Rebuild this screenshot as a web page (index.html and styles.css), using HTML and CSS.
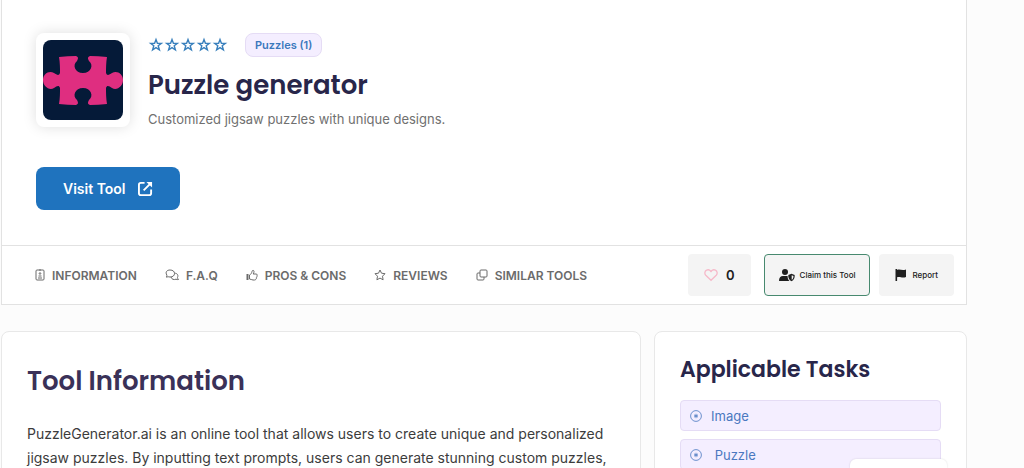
FILE: index.html
```html
<!DOCTYPE html>
<html lang="en">
<head>
	<meta charset="UTF-8">
	<meta name="viewport" content="width=device-width, initial-scale=1">
	<title>Puzzle generator</title>
	<link rel="stylesheet" href="styles.css">
</head>
<body>
	<div class="container">
		<header class="tool-header">
			<div class="tool-intro">
				<div class="tool-top">
					<div class="tool-logo">
						<svg viewBox="0 0 80 80" aria-hidden="true">
							<rect width="80" height="80" fill="#051a38"/>
							<path fill="#df2e80" d="M16 17q9-1 17-1c3 1 2 3 1 5-5 4-2 12 6 12s11-8 6-12c-1-2-2-4 1-5q8 0 17 1c-1 6-1 11-1 16 1 3 3 2 6 0 5-3 11 1 11 7s-6 11-11 8c-3-2-5-3-6 0 0 5 0 10 1 16q-9 1-17 1c-3-1-2-3-1-5 5-4 2-12-6-12s-11 8-6 12c1 2 2 4-1 5q-8 0-17-1c1-6 1-11 1-16-1-3-3-2-6 0-5 3-11-2-11-8s6-10 11-7c3 2 5 3 6 0 0-5 0-10-1-16z"/>
						</svg>
					</div>
					<div class="tool-title">
						<div class="tool-meta">
							<div class="stars" role="img" aria-label="0 of 5 stars">
								<svg viewBox="0 0 16 16"><path d="M8 2.500l1.400 3.700 4 .1-3.200 2.500 1.200 4L8 10.600l-3.400 2.200 1.200-4-3.200-2.500 4-.1z"/></svg>
								<svg viewBox="0 0 16 16"><path d="M8 2.500l1.400 3.700 4 .1-3.200 2.500 1.200 4L8 10.600l-3.400 2.200 1.200-4-3.200-2.500 4-.1z"/></svg>
								<svg viewBox="0 0 16 16"><path d="M8 2.500l1.400 3.700 4 .1-3.200 2.500 1.200 4L8 10.600l-3.400 2.200 1.200-4-3.200-2.500 4-.1z"/></svg>
								<svg viewBox="0 0 16 16"><path d="M8 2.500l1.400 3.700 4 .1-3.200 2.500 1.200 4L8 10.600l-3.400 2.200 1.200-4-3.200-2.500 4-.1z"/></svg>
								<svg viewBox="0 0 16 16"><path d="M8 2.500l1.400 3.700 4 .1-3.200 2.500 1.200 4L8 10.600l-3.400 2.200 1.200-4-3.200-2.500 4-.1z"/></svg>
							</div>
							<a class="tag" href="#">Puzzles (1)</a>
						</div>
						<h1>Puzzle generator</h1>
						<p>Customized jigsaw puzzles with unique designs.</p>
					</div>
				</div>
				<a class="btn-visit" href="#">
					Visit Tool
					<svg viewBox="0 0 16 16" fill="none" stroke="currentColor" stroke-width="2" aria-hidden="true">
						<path d="M7 2H3q-2 0-2 2v9q0 2 2 2h9q2 0 2-2V9M6 10l8-8"/>
						<path d="M9 1h6v6z" fill="currentColor" stroke="none"/>
					</svg>
				</a>
			</div>
			<div class="tool-bar">
				<nav class="tabs">
					<a href="#information">
						<svg class="narrow" viewBox="0 0 10 12" aria-hidden="true"><rect x="1" y="1" width="8" height="10" rx="1"/><path d="M4 1h2M3 9h4"/><circle cx="5" cy="4.500" r=".8"/><path d="M3.500 7h3"/></svg>
						INFORMATION
					</a>
					<a href="#faq">
						<svg class="wide" viewBox="0 0 14 12" aria-hidden="true"><path d="M1 8c1-1 1-1 .8-2C0 3 2 1 5 1s4.500 1.500 4.500 3.500S8 8 5 8c-1 0-1.500-.3-2-.3q-1 .5-2 .3z"/><path d="M9.500 4.200c3 0 4 2 3 4.300q.2 1.500 1 2-1.300.3-2.500-.3c-2 .8-4.300.3-5-2.200"/></svg>
						F.A.Q
					</a>
					<a href="#pros">
						<svg viewBox="0 0 12 12" aria-hidden="true"><path d="M1.500 5v6" stroke-width="2"/><path d="M3.500 6c1.500-.5 2.200-2.200 2.500-3.500.2-1.500 2-1.500 2 0 0 1-.4 1.700-.8 2.500H10c1.500 0 1.500 1.500.7 2 .6.7.3 1.400-.4 1.700.3.900 0 1.300-.6 1.500 0 .8-.7.800-1.200.8H7c-1.500 0-2-1-3.500-1z"/></svg>
						PROS &amp; CONS
					</a>
					<a href="#reviews">
						<svg viewBox="0 0 12 12" aria-hidden="true"><path d="M6 1l1.500 3.200 3.500.5-2.500 2.500.6 3.600L6 9.100l-3.100 1.700.6-3.600L1 4.700l3.500-.5z"/></svg>
						REVIEWS
					</a>
					<a href="#similar">
						<svg viewBox="0 0 12 12" aria-hidden="true"><rect x="4" y="1" width="7" height="7" rx="1"/><path d="M4 4H2q-1 0-1 1v5q0 1 1 1h5q1 0 1-1V8"/></svg>
						SIMILAR TOOLS
					</a>
				</nav>
				<div class="actions">
					<button class="btn-like" type="button" aria-label="Like, 0">
						<svg viewBox="0 0 16 14" fill="none" stroke="#f6b9c9" stroke-width="1.500" aria-hidden="true"><path d="M8 13L2 7.200C.3 5.400.8 2.400 3 1.400c2-.9 3.800 0 5 1.600 1.200-1.600 3-2.500 5-1.600 2.200 1 2.700 4 1 5.800z"/></svg>
						0
					</button>
					<button class="btn-claim" type="button">
						<svg viewBox="0 0 16 14" fill="currentColor" aria-hidden="true"><circle cx="6" cy="4" r="3"/><path d="M0 13c0-3.500 1.500-5 4-5h4l.7.2C8.500 10 9 11.800 10.500 13z"/><path d="M12.500 5.800l3.200 1.200c.2 3-.8 5-3.200 6.200-2.400-1.200-3.400-3.200-3.200-6.200z"/><path fill="#f4f4f4" d="M12.700 7.200l1.800.7c0 1.900-.6 3.100-1.800 3.900z"/></svg>
						Claim this Tool
					</button>
					<button class="btn-report" type="button">
						<svg viewBox="0 0 12 14" fill="currentColor" aria-hidden="true"><path d="M.5 1h1.600v1c3-1.200 5 1 8.900-.6V9c-4 1.500-6-.8-8.900.3V13H.5z"/></svg>
						Report
					</button>
				</div>
			</div>
		</header>

		<div class="columns">
			<main class="card info" id="information">
				<h2>Tool Information</h2>
				<p>PuzzleGenerator.ai is an online tool that allows users to create unique and personalized jigsaw puzzles. By inputting text prompts, users can generate stunning custom puzzles,</p>
			</main>
			<aside class="card tasks">
				<h3>Applicable Tasks</h3>
				<ul>
					<li><a href="#">
						<svg viewBox="0 0 12 12" aria-hidden="true"><circle cx="6" cy="6" r="5.400"/><path d="M6 3.800v4.400M4 4.900l4 2.200M8 4.900L4 7.100"/></svg>
						Image
					</a></li>
					<li><a href="#">
						<svg viewBox="0 0 12 12" aria-hidden="true"><circle cx="6" cy="6" r="5.400"/><path d="M6 3.800v4.400M4 4.900l4 2.200M8 4.900L4 7.100"/></svg>
						&nbsp;Puzzle
					</a></li>
				</ul>
			</aside>
		</div>
	</div>
	<div class="float-box"></div>
</body>
</html>
```
FILE: styles.css
```css
*{
	box-sizing:border-box;
}
body{
	margin:0;
	background:#fcfcfc;
	font-family:Inter, "Liberation Sans", sans-serif;
	font-size:13px;
	color:#3c3c3c;
}
h1, h2, h3, p, ul{
	margin:0;
	padding:0;
}
a{
	text-decoration:none;
}
svg{
	display:block;
	flex:none;
}
.container{
	padding:0 57px 0 1px;
}

/* header */
.tool-header{
	background:#fff;
	border:1px solid #e2e2e2;
	border-top:0;
}
.tool-intro{
	padding:33px 34px 35px;
}
.tool-top{
	display:flex;
	gap:18px;
	margin-bottom:38px;
}
.tool-logo{
	flex:none;
	align-self:flex-start;
	padding:7px;
	border-radius:8px;
	background:#fff;
	box-shadow:0 0 14px rgba(0,0,0,0.13);
}
.tool-logo svg{
	width:80px;
	height:80px;
	border-radius:8px;
}
.tool-meta{
	display:flex;
	align-items:center;
	gap:17px;
	height:24px;
}
.stars{
	display:flex;
}
.stars svg{
	width:16px;
	height:16px;
	fill:none;
	stroke:#3980bd;
	stroke-width:1.4;
}
.tag{
	padding:0 9px;
	border:1px solid #e5dcf5;
	border-radius:8px;
	background:#f4eeff;
	color:#3b78bd;
	font-size:11px;
	font-weight:600;
	line-height:22px;
}
h1, h2, h3{
	font-family:Poppins, Inter, sans-serif;
	font-weight:600;
	color:#28264a;
}
h1{
	margin-top:10px;
	font-size:26px;
	line-height:36px;
}
.tool-title p{
	margin-top:6px;
	line-height:20px;
	color:#707070;
}
.btn-visit{
	display:inline-flex;
	align-items:center;
	gap:12px;
	height:43px;
	padding:0 27px;
	border-radius:8px;
	background:#1f73be;
	color:#fff;
	font-size:14px;
	font-weight:600;
}
.btn-visit svg{
	width:15px;
	height:15px;
}

/* tabs and buttons */
.tool-bar{
	display:flex;
	align-items:center;
	justify-content:space-between;
	height:59px;
	padding:0 12px 0 33px;
	border-top:1px solid #e2e2e2;
}
.tabs{
	display:flex;
	gap:28px;
}
.tabs a{
	display:flex;
	align-items:center;
	gap:7px;
	color:#6b6b6b;
	font-size:12px;
	font-weight:600;
	white-space:nowrap;
}
.tabs svg{
	width:12px;
	height:12px;
	fill:none;
	stroke:#6b6b6b;
}
.tabs .narrow{
	width:10px;
}
.tabs .wide{
	width:14px;
}
.actions{
	display:flex;
	gap:9px;
}
.actions button{
	display:flex;
	align-items:center;
	justify-content:center;
	height:42px;
	border:0;
	border-radius:4px;
	background:#f4f4f4;
	color:#202020;
	font-family:inherit;
	font-size:8px;
	font-weight:500;
	gap:5px;
	padding:0 16px;
	white-space:nowrap;
}
.actions svg{
	height:14px;
	width:16px;
}
.actions .btn-like{
	gap:8px;
	margin-right:4px;
	font-size:13px;
	font-weight:600;
}
.actions .btn-like svg{
	width:14px;
}
.actions .btn-claim{
	padding:0 14px;
	border:1px solid #47896f;
}
.actions .btn-report svg{
	width:12px;
}

/* content */
.columns{
	display:grid;
	grid-template-columns:640fr 313fr;
	gap:13px;
	margin-top:26px;
}
.card{
	border:1px solid #e8e8e8;
	border-radius:8px;
	background:#fff;
	padding:26px 25px;
}
.info h2{
	margin-top:5px;
	font-size:26px;
	line-height:36px;
	color:#3a3158;
}
.info p{
	margin-top:23px;
	font-size:14px;
	line-height:24px;
}
.tasks{
	padding:19px 25px;
}
.tasks h3{
	font-size:22px;
	line-height:38px;
}
.tasks ul{
	display:grid;
	gap:8px;
	margin-top:11px;
	list-style:none;
}
.tasks a{
	display:flex;
	align-items:center;
	gap:9px;
	height:31px;
	padding:0 9px;
	border:1px solid #e5dcf5;
	border-radius:4px;
	background:#f4eeff;
	color:#4a78c0;
}
.tasks svg{
	width:12px;
	height:12px;
	fill:none;
	stroke:#4a78c0;
	stroke-width:0.8;
}
.float-box{
	position:fixed;
	right:77px;
	bottom:0;
	width:97px;
	height:9px;
	border-radius:6px 6px 0 0;
	background:#fff;
	box-shadow:0 0 2px rgba(0,0,0,0.15);
}
```
